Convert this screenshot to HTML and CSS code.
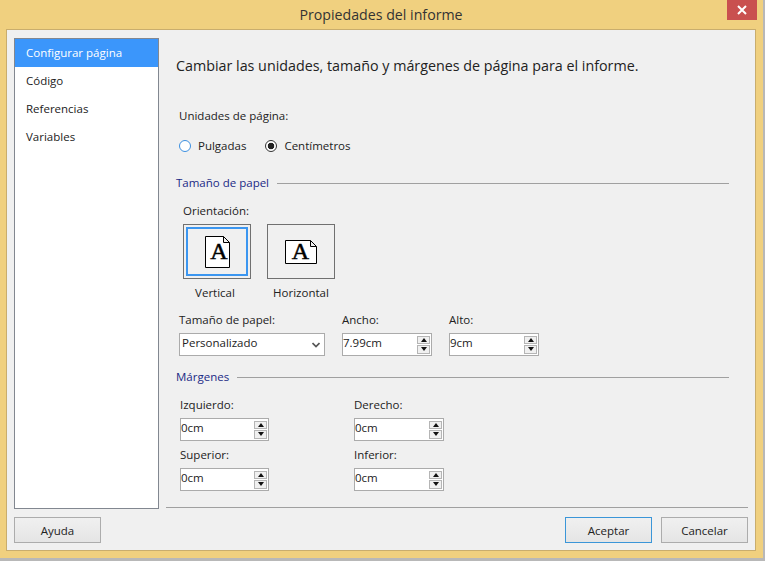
FILE: index.html
```html
<!DOCTYPE html>
<html lang="es">
<head>
    <meta charset="UTF-8">
    <title>Propiedades del informe</title>
    <link rel="stylesheet" href="styles.css">
</head>
<body>
    <div class="window">
        <div class="titlebar">
            <span class="title">Propiedades del informe</span>
            <div class="close">
                <svg width="10" height="10" viewBox="0 0 10 10"><path d="M1 1 L9 9 M9 1 L1 9" stroke="#fff" stroke-width="2" fill="none"/></svg>
            </div>
        </div>
        <div class="client">
            <div class="upper">
                <ul class="nav">
                    <li class="selected">Configurar página</li>
                    <li>Código</li>
                    <li>Referencias</li>
                    <li>Variables</li>
                </ul>
                <div class="content">
                    <p class="lead">Cambiar las unidades, tamaño y márgenes de página para el informe.</p>
                    <p class="units-label">Unidades de página:</p>
                    <div class="radios">
                        <div class="radio"><span class="dot"></span>Pulgadas</div>
                        <div class="radio checked"><span class="dot"></span>Centímetros</div>
                    </div>

                    <div class="section paper-head"><span>Tamaño de papel</span></div>
                    <p class="orient-label">Orientación:</p>
                    <div class="orient">
                        <div class="orient-item portrait">
                            <div class="orient-btn focused">
                                <svg class="page" width="25" height="32" viewBox="0 0 25 32">
                                    <path d="M0.5 0.5 H18.5 L24.5 6.5 V31.5 H0.5 Z M18.5 0.5 V6.5 H24.5" fill="#fff" stroke="#000"/>
                                    <text x="14" y="23" class="glyph">A</text>
                                </svg>
                            </div>
                            <span>Vertical</span>
                        </div>
                        <div class="orient-item">
                            <div class="orient-btn">
                                <svg class="page" width="32" height="24" viewBox="0 0 32 24">
                                    <path d="M0.5 0.5 H25.5 L31.5 6.5 V23.5 H0.5 Z M25.5 0.5 V6.5 H31.5" fill="#fff" stroke="#000"/>
                                    <text x="15.5" y="19" class="glyph">A</text>
                                </svg>
                            </div>
                            <span>Horizontal</span>
                        </div>
                    </div>

                    <div class="paper-row">
                        <div class="field paper-size">
                            <label>Tamaño de papel:</label>
                            <div class="select">
                                <span>Personalizado</span>
                                <svg width="8" height="6" viewBox="0 0 8 6"><path d="M0.5 1 L4 4.5 L7.5 1" stroke="#555" stroke-width="1.7" fill="none"/></svg>
                            </div>
                        </div>
                        <div class="field paper-w">
                            <label>Ancho:</label>
                            <div class="spin"><span>7.99cm</span><div class="arrows"><i class="up"></i><i class="down"></i></div></div>
                        </div>
                        <div class="field paper-h">
                            <label>Alto:</label>
                            <div class="spin"><span>9cm</span><div class="arrows"><i class="up"></i><i class="down"></i></div></div>
                        </div>
                    </div>

                    <div class="section margins-head"><span>Márgenes</span></div>
                    <div class="margins">
                        <div class="field">
                            <label>Izquierdo:</label>
                            <div class="spin"><span>0cm</span><div class="arrows"><i class="up"></i><i class="down"></i></div></div>
                        </div>
                        <div class="field">
                            <label>Derecho:</label>
                            <div class="spin"><span>0cm</span><div class="arrows"><i class="up"></i><i class="down"></i></div></div>
                        </div>
                        <div class="field">
                            <label>Superior:</label>
                            <div class="spin"><span>0cm</span><div class="arrows"><i class="up"></i><i class="down"></i></div></div>
                        </div>
                        <div class="field">
                            <label>Inferior:</label>
                            <div class="spin"><span>0cm</span><div class="arrows"><i class="up"></i><i class="down"></i></div></div>
                        </div>
                    </div>
                </div>
            </div>
            <div class="footer">
                <button class="btn">Ayuda</button>
                <div class="footer-right">
                    <button class="btn default">Aceptar</button>
                    <button class="btn">Cancelar</button>
                </div>
            </div>
        </div>
    </div>
</body>
</html>
```

FILE: styles.css
```css
html, body {
    margin: 0;
    padding: 0;
    background: #b8b8b8;
}
body {
    width: 765px;
    height: 561px;
    overflow: hidden;
    font-family: "Open Sans", "Noto Sans", sans-serif;
    font-size: 11.5px;
    color: #222;
}
p {
    margin: 0;
}
.window {
    width: 763px;
    height: 558px;
    background: #f0d07f;
    padding: 0 7px 7px 6px;
    box-sizing: border-box;
    display: flex;
    flex-direction: column;
}
.titlebar {
    height: 29px;
    flex: none;
    display: flex;
    justify-content: center;
    position: relative;
}
.title {
    font-size: 14.2px;
    line-height: 30px;
    color: #333;
}
.close {
    position: absolute;
    top: 0;
    right: -1px;
    width: 30px;
    height: 20px;
    background: #c9504f;
    display: flex;
    align-items: center;
    justify-content: center;
}
.client {
    flex: 1;
    background: #f0f0f0;
    border: 1px solid #c9ad6d;
    box-sizing: border-box;
    display: flex;
    flex-direction: column;
}
.upper {
    display: flex;
    height: 478px;
    padding: 8px 0 0 7px;
    box-sizing: border-box;
}
.nav {
    list-style: none;
    margin: 0;
    padding: 0;
    width: 145px;
    height: 471px;
    box-sizing: border-box;
    flex: none;
    background: #fff;
    border: 1px solid #828790;
}
.nav li {
    height: 28px;
    line-height: 27px;
    padding-left: 11px;
}
.nav .selected {
    background: #3b96fb;
    color: #fff;
}
.content {
    flex: 1;
    padding-left: 17px;
    margin-right: 7px;
    position: relative;
}
.content::after {
    /* separador sobre los botones */
    content: "";
    position: absolute;
    left: 7px;
    right: 0;
    top: 469px;
    border-top: 1px solid #a0a0a0;
}
.lead {
    font-size: 14.3px;
    line-height: 20px;
    margin-top: 18px;
}
.units-label {
    margin: 32px 0 0 3px;
    line-height: 16px;
}
.radios {
    display: flex;
    gap: 19px;
    margin: 14px 0 0 3px;
    line-height: 16px;
}
.radio {
    display: flex;
    align-items: center;
    gap: 7px;
}
.dot {
    width: 12px;
    height: 12px;
    box-sizing: border-box;
    border: 1px solid #3b8fe0;
    border-radius: 50%;
    background: #fff;
}
.radio.checked .dot {
    border-color: #333;
    background: radial-gradient(circle, #222 0, #222 3px, #fff 3.6px);
}
.section {
    display: flex;
    align-items: center;
    gap: 8px;
    color: #1b2a85;
    line-height: 16px;
    margin-right: 19px;
}
.section::after {
    content: "";
    flex: 1;
    border-top: 1px solid #a0a0a0;
}
.paper-head {
    margin-top: 21px;
}
.orient-label {
    margin: 12px 0 0 7px;
    line-height: 16px;
}
.orient {
    display: flex;
    gap: 16px;
    margin: 5px 0 0 7px;
}
.orient-item {
    width: 68px;
    display: flex;
    flex-direction: column;
    align-items: center;
    gap: 6px;
    line-height: 16px;
}
.portrait span {
    margin-right: 4px;
}
.orient-btn {
    width: 68px;
    height: 55px;
    box-sizing: border-box;
    border: 1px solid #707070;
    background: #f0f0f0;
    display: flex;
    align-items: center;
    justify-content: center;
}
.orient-btn.focused {
    box-shadow: inset 0 0 0 2px #f0f0f0, inset 0 0 0 4px #3b96f0;
}
.page {
    overflow: visible;
}
.glyph {
    font-family: "Liberation Serif", serif;
    font-size: 24px;
    stroke: #000;
    stroke-width: 0.5px;
    text-anchor: middle;
}
.field label {
    display: block;
    line-height: 16px;
    margin-bottom: 5px;
}
.paper-row {
    display: flex;
    margin: 11px 0 0 3px;
}
.paper-size {
    width: 146px;
    margin-right: 17px;
}
.paper-w {
    margin-right: 17px;
}
.select,
.spin {
    height: 23px;
    box-sizing: border-box;
    background: #fff;
    border: 1px solid #ababab;
    display: flex;
    align-items: center;
    justify-content: space-between;
    line-height: 20px;
}
.select span,
.spin span {
    margin-bottom: 3px;
}
.select {
    padding: 0 4px 0 2px;
}
.spin {
    width: 90px;
}
.arrows {
    width: 13px;
    height: 18px;
    margin-right: 1px;
    display: flex;
    flex-direction: column;
    gap: 1px;
}
.arrows i {
    flex: 1;
    box-sizing: border-box;
    border: 1px solid #b5b5b5;
    background: #f0f0f0;
    display: flex;
    align-items: center;
    justify-content: center;
}
.arrows i::before {
    content: "";
    border-left: 3px solid transparent;
    border-right: 3px solid transparent;
}
.arrows .up::before {
    border-bottom: 4px solid #111;
}
.arrows .down::before {
    border-top: 4px solid #111;
}
.margins-head {
    margin-top: 13px;
}
.margins {
    display: grid;
    grid-template-columns: 89px 90px;
    column-gap: 85px;
    row-gap: 6px;
    margin: 12px 0 0 4px;
}
.margins .spin {
    width: auto;
}
.footer {
    display: flex;
    justify-content: space-between;
    padding: 9px 7px 0 7px;
}
.footer-right {
    display: flex;
    gap: 9px;
}
.btn {
    width: 87px;
    height: 26px;
    padding: 0;
    font: inherit;
    color: #222;
    border: 1px solid #acacac;
    background: linear-gradient(#f0f0f0, #e5e5e5);
}
.btn.default {
    border-color: #3b96d8;
}
```
